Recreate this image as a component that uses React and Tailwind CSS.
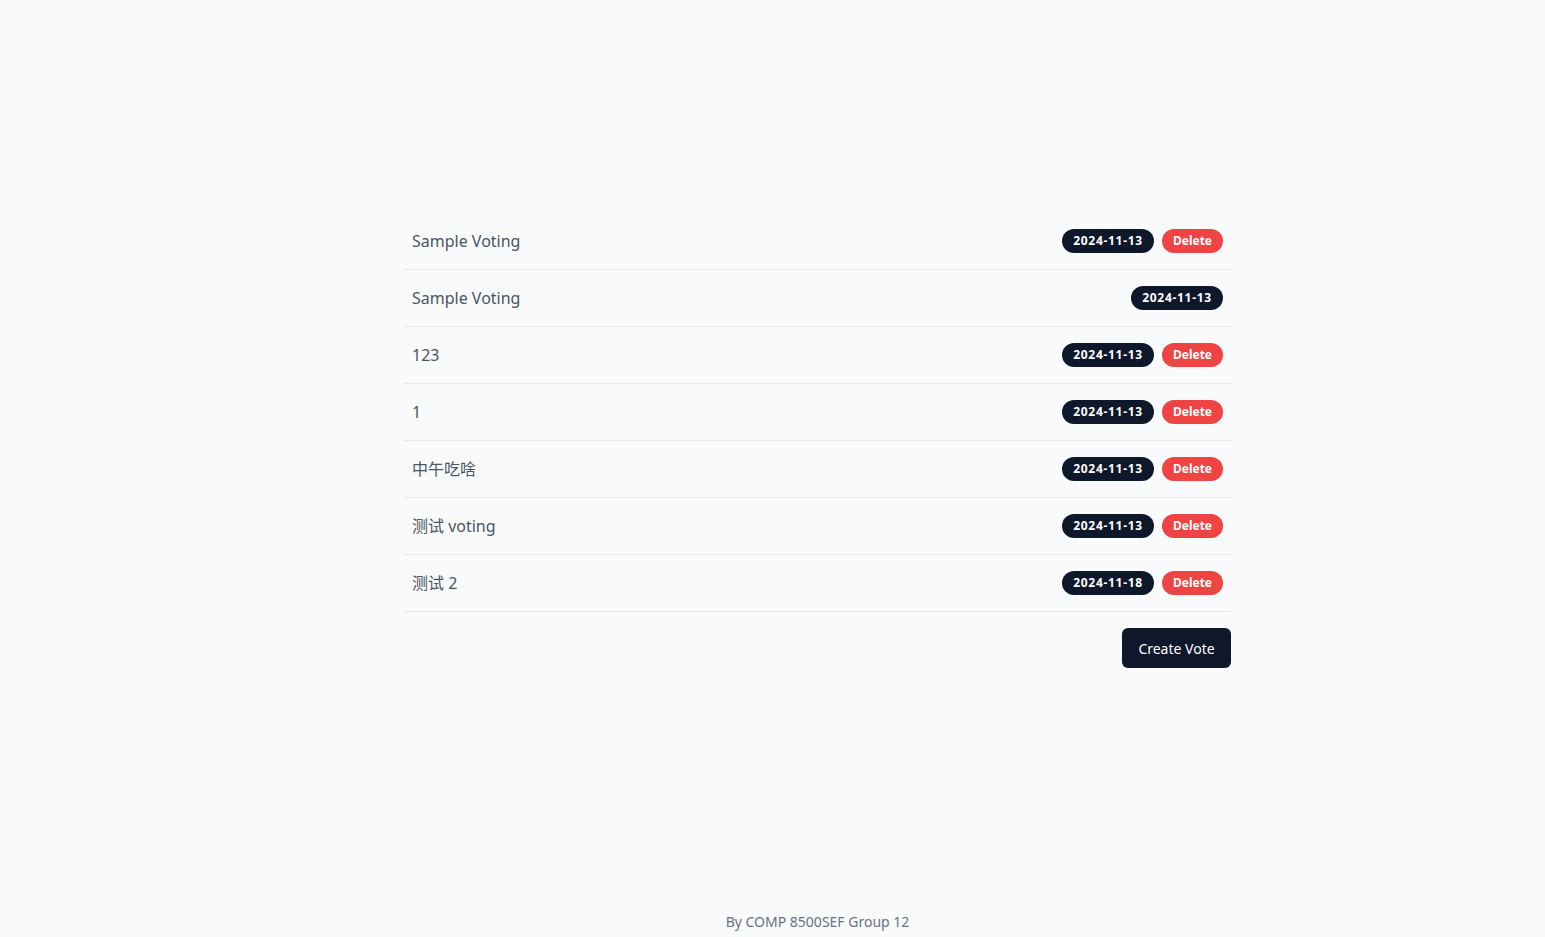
import React from "react";

const votes = [
  { id: 1, title: "Sample Voting", date: "2024-11-13", canDelete: true },
  { id: 2, title: "Sample Voting", date: "2024-11-13", canDelete: false },
  { id: 3, title: "123", date: "2024-11-13", canDelete: true },
  { id: 4, title: "1", date: "2024-11-13", canDelete: true },
  { id: 5, title: "中午吃啥", date: "2024-11-13", canDelete: true },
  { id: 6, title: "测试 voting", date: "2024-11-13", canDelete: true },
  { id: 7, title: "测试 2", date: "2024-11-18", canDelete: true },
];

const App = () => {
  return (
    <div
      className="min-h-screen bg-gray-50 flex flex-col"
      style={{ fontFamily: '"Noto Sans", "Noto Sans CJK SC", sans-serif' }}
    >
      <div className="flex-1 pt-[213px] pl-[404px]">
        <div className="w-[827px]">
          <ul>
            {votes.map((vote) => (
              <li
                key={vote.id}
                className="h-[57px] flex items-center justify-between px-2 border-b border-gray-200"
              >
                <span className="text-[16px] text-gray-600">{vote.title}</span>
                <div className="flex items-center gap-2">
                  <span className="h-6 w-[92px] flex items-center justify-center rounded-full bg-[#0f172a] text-white text-[12px] font-bold tracking-[0.7px]">
                    {vote.date}
                  </span>
                  {vote.canDelete && (
                    <button className="h-6 w-[61px] flex items-center justify-center rounded-full bg-[#ef4444] text-white text-[12px] font-bold">
                      Delete
                    </button>
                  )}
                </div>
              </li>
            ))}
          </ul>
          <div className="flex justify-end mt-4">
            <button className="h-10 w-[109px] rounded-md bg-[#0f172a] text-white text-[14px]">
              Create Vote
            </button>
          </div>
        </div>
      </div>
      <footer className="h-[30px] pl-[404px]">
        <p className="w-[827px] text-center text-[14px] text-gray-500 leading-[30px]">
          By COMP 8500SEF Group 12
        </p>
      </footer>
    </div>
  );
};

export default App;
